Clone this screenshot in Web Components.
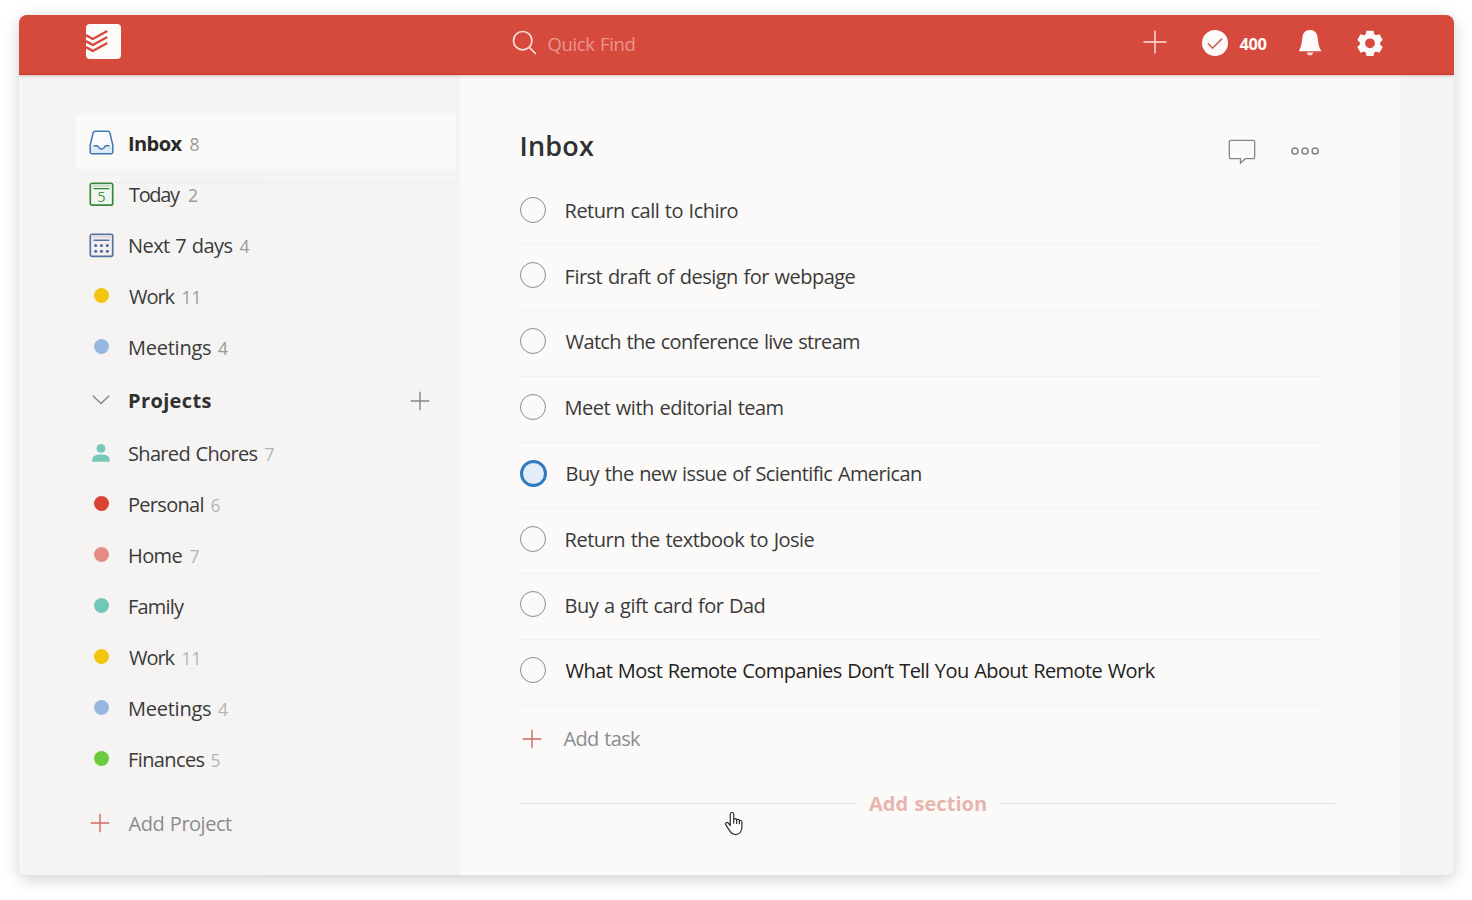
<!DOCTYPE html>
<html lang="en">
<head>
<meta charset="utf-8">
<title>Inbox</title>
<style>
  html, body { margin: 0; height: 100%; background: #fff; overflow: hidden; }
  body { font-family: "Open Sans", "Noto Sans", sans-serif; font-size: 20px; color: #3a3a3a; }
</style>
</head>
<body>
<todo-app></todo-app>
<script>
const define = (name, html, setup) => {
  const tpl = document.createElement('template');
  tpl.innerHTML = html;
  customElements.define(name, class extends HTMLElement {
    connectedCallback() {
      if (this.shadowRoot) return;
      this.attachShadow({ mode: 'open' }).appendChild(tpl.content.cloneNode(true));
      if (setup) setup(this, this.shadowRoot);
    }
  });
};

/* Text whose inked extent is exactly `ink` pixels wide. */
const ctx = document.createElement('canvas').getContext('2d');
define('fit-text', `<style>
  :host { display: block; flex: none; white-space: nowrap; line-height: 28px; font-kerning: normal; word-spacing: 1px; }
</style><slot></slot>`, host => {
  const cs = getComputedStyle(host), text = host.textContent, ink = +host.getAttribute('ink');
  ctx.font = cs.fontWeight + ' ' + cs.fontSize + ' ' + cs.fontFamily;
  const m = ctx.measureText(text);
  const natural = m.actualBoundingBoxLeft + m.actualBoundingBoxRight + text.split(' ').length - 1;
  if (text.length > 1) host.style.letterSpacing = ((ink - natural) / (text.length - 1)).toFixed(3) + 'px';
  host.style.textIndent = m.actualBoundingBoxLeft.toFixed(2) + 'px';
  host.style.width = ink + 'px';
});

const icons = {
  logo: [35, 35, `<rect width="35" height="35" rx="4" fill="#fdfcfb"/><g fill="none" stroke="#d6493d" stroke-width="2.5" stroke-linejoin="round"><path d="M0 11.2 6.8 15 21.3 7"/><path d="M0 17.2 6.8 21 21.3 13"/><path d="M0 23.2 6.8 27 21.3 19"/></g>`],
  search: [26, 26, `<g fill="none" stroke="#fbdcd6" stroke-width="1.7"><circle cx="10.7" cy="10.7" r="9.2"/><path d="M17.3 17.3 24 24"/></g>`],
  plus: [24, 24, `<path d="M12 .5v23M.5 12h23" stroke="#fbe4df" stroke-width="1.4"/>`],
  done: [26, 26, `<circle cx="13" cy="13" r="13" fill="#fdfbf9"/><path d="m5.8 13.3 4.7 4.8 9.7-9.5" fill="none" stroke="#d0625a" stroke-width="1.5"/>`],
  bell: [24, 28, `<path d="M12 1C7.2 1 4.8 4.3 4.4 8.6 4 14 3 18 .8 22.2h22.4C21 18 20 14 19.6 8.6 19.2 4.3 16.8 1 12 1Z" fill="#fdfbf9"/><path d="M8.7 23.4h6.6c-.3 1.8-1.6 2.9-3.3 2.9s-3-1.1-3.3-2.9Z" fill="#f7d9d3"/>`],
  gear: [26, 26, `<path fill="#fdfbf9" fill-rule="evenodd" d="m9.5.8 7 0 .8 3.5 1.7 1 3.5-1.1 3.2 5.8-2.6 2.5v1.9l2.6 2.5-3.2 5.8-3.5-1.1-1.7 1-.8 3.3h-7l-.8-3.3-1.7-1-3.5 1.1-3.2-5.8 2.6-2.5v-1.9L.3 10l3.2-5.8L7 5.3l1.7-1ZM13 8.4a4.9 4.9 0 1 0 0 9.8 4.9 4.9 0 0 0 0-9.8Z"/>`],
  inbox: [25, 25, `<path d="M6.2 1.3h12.6c1.1 0 1.8.5 2.1 1.5l2.9 12.6v6.2c0 1.3-.8 2.1-2.1 2.1H3.300c-1.300 0-2.100-.8-2.100-2.100v-6.200L4.100 2.800c.3-1 1-1.500 2.100-1.500Z" fill="#f9fbfd" stroke="#3f76b5" stroke-width="1.500"/><path d="M2 16h21v5.500c0 1-.6 1.500-1.500 1.500h-18C2.600 23 2 22.500 2 21.500Z" fill="#dfeaf5"/><path d="M4.500 15.800h3.800c.9 0 1 3.400 4.200 3.400s3.300-3.400 4.200-3.400h3.800" fill="none" stroke="#3f76b5" stroke-width="1.500"/>`],
  today: [25, 25, `<rect x="1.300" y="1.300" width="22.400" height="21.900" rx="1.800" fill="#f1f7f0" stroke="#37883b" stroke-width="1.700"/><path d="M2 2h21v3H2z" fill="#cfe2cf"/><path d="M4.500 6.600h16" stroke="#37883b" stroke-width="1.300"/>`],
  week: [25, 25, `<rect x="1.300" y="1.300" width="22.400" height="22.100" rx="1.800" fill="#f6eff1" stroke="#54719f" stroke-width="1.700"/><path d="M2.100 2.100h20.800v3H2.100z" fill="#e2d9e2"/><path d="M4.500 7.300h16" stroke="#54719f" stroke-width="1.500"/><g fill="#4a689b"><circle cx="6.700" cy="12.400" r="1.500"/><circle cx="12.500" cy="12.400" r="1.500"/><circle cx="18.300" cy="12.400" r="1.500"/><circle cx="6.700" cy="18.200" r="1.500"/><circle cx="12.500" cy="18.200" r="1.500"/><circle cx="18.300" cy="18.200" r="1.500"/></g>`],
  person: [18, 18, `<circle cx="9" cy="4.400" r="4.400" fill="#76c9b8"/><path d="M.3 17.700v-1.900c0-3.600 3.400-5.400 8.700-5.400s8.700 1.800 8.700 5.400v1.900Z" fill="#76c9b8"/>`],
  chevron: [18, 10, `<path d="m.8.8 8.200 7.700L17.200.8" fill="none" stroke="#858585" stroke-width="1.400"/>`],
  add: [20, 20, `<path d="M10 .7v18.600M.7 10h18.600" stroke="currentColor" stroke-width="1.400"/>`],
  comment: [28, 26, `<path d="M3.200 1.300h21.600c1.200 0 1.900.7 1.900 1.900v14.600c0 1.200-.7 1.900-1.900 1.900h-7.600l-4.700 4.500v-4.500H3.200c-1.200 0-1.900-.7-1.900-1.900V3.200c0-1.200.7-1.900 1.900-1.900Z" fill="none" stroke="#858585" stroke-width="1.300"/>`],
  more: [30, 10, `<g fill="none" stroke="#858585" stroke-width="1.500"><circle cx="5" cy="5" r="3.100"/><circle cx="15.100" cy="5" r="3.100"/><circle cx="25.200" cy="5" r="3.100"/></g>`],
  hand: [20, 25, `<path d="M6.300 14.500V3.200c0-2.600 3.400-2.600 3.400 0v5.300c.5-1.300 2.800-1.100 2.900.5.600-1 2.600-.7 2.800.8.700-.8 2.500-.4 2.500 1.300v5.200c0 4.400-2.700 7.200-6.300 7.200-3 0-4.600-1.400-6.400-4.300l-3.500-5.500c-1-1.700 1.100-3.100 2.500-1.700Z" fill="#fff" stroke="#333" stroke-width="1.250" stroke-linejoin="round"/><path d="M9.700 8.500v4.300M12.600 9v4M15.400 9.800v3.500" stroke="#333" stroke-width="1.200"/>`]
};
define('ui-icon', `<style>:host { display: block; flex: none; } svg { display: block; overflow: visible; }</style>`, (host, root) => {
  const [w, h, body] = icons[host.getAttribute('name')];
  root.innerHTML += `<svg width="${w}" height="${h}" viewBox="0 0 ${w} ${h}">${body}</svg>`;
});

define('app-header', `<style>
  :host { display: flex; align-items: flex-start; height: 60px; box-sizing: border-box; padding-left: 67px; background: #d6493d;
    border-bottom: 1.500px solid #c5372b; color: #fdfbf9; position: relative; z-index: 1; box-shadow: 0 1px 3px rgba(160,70,60,.3); }
</style>
<ui-icon name="logo" style="margin:9.400px 0 0 -.2px"></ui-icon>
<ui-icon name="search" style="margin:14.500px 0 0 390.700px"></ui-icon>
<fit-text ink="86" style="margin:15px 0 0 11px;font-size:18.500px;color:#ea968c">Quick Find</fit-text>
<ui-icon name="plus" style="margin:15px 0 0 508px"></ui-icon>
<ui-icon name="done" style="margin:15px 0 0 35px"></ui-icon>
<fit-text ink="27" style="margin:14.500px 0 0 12px;font-size:16.500px;font-weight:700">400</fit-text>
<ui-icon name="bell" style="margin:14px 0 0 31px"></ui-icon>
<ui-icon name="gear" style="margin:14.500px 0 0 35.200px"></ui-icon>`);

define('nav-item', `<style>
  :host { display: grid; grid-template-columns: 53px auto 1fr; align-items: center; height: 51px; box-sizing: border-box; }
  :host([selected]) { height: 54px; padding-top: 4px; background: #fbfaf8; margin-right: 4px; margin-bottom: .5px; }
  .lead { display: grid; place-items: center; width: 25px; margin-left: 13px; }
  .dot { width: 15px; height: 15px; border-radius: 50%; margin: -3px 0 0 -1px; }
  .lead ui-icon { grid-area: 1/1; margin-top: -2px; }
  .lead ui-icon[name=person] { margin: -1px 0 0 -1px; }
  .lead ui-icon[name=inbox] { margin-top: -3px; }
  .day { grid-area: 1/1; font-size: 14px; line-height: 14px; color: #3b9a4a; padding-top: 4px; z-index: 1; }
  .count { margin: 0 0 0 7px; font-size: 17.500px; color: var(--count, #999); }
</style>
<span class="lead"></span><slot></slot>`, (host, root) => {
  const lead = root.querySelector('.lead'), icon = host.getAttribute('icon'), n = host.getAttribute('count');
  if (icon) lead.innerHTML = `<ui-icon name="${icon}"></ui-icon>` + (icon === 'today' ? '<span class="day">5</span>' : '');
  else lead.innerHTML = `<span class="dot" style="background:${host.getAttribute('dot')}"></span>`;
  if (n) {
    const c = document.createElement('fit-text');
    c.className = 'count'; c.textContent = n; c.setAttribute('ink', n.length > 1 ? 16 : 9);
    root.appendChild(c);
  }
});

define('side-bar', `<style>
  :host { display: block; width: 441px; box-sizing: border-box; padding: 40px 0 0 57px;
    background: linear-gradient(#ecebea, #ecebea) 94px 107px / 347px 1px no-repeat,
      linear-gradient(#f6f5f6, #f6f5f6) 243px 107px / 198px 800px no-repeat, #f5f4f3; }
  .group { display: grid; grid-template-columns: 16px 36px auto 1fr 50px; align-items: center; height: 55px; margin-top: -.5px; }
  .projects { --count: #b5b4b4; }
  .add { display: flex; align-items: center; height: 28px; margin-top: 25px; padding-left: 14px; color: #8c8c8c; }
  .add ui-icon { color: #d0695f; margin-top: -1.500px; }
  .add fit-text { margin-left: 18.500px; }
  .group .plus { color: #858585; margin-top: .5px; }
  .group ui-icon[name=chevron] { margin-top: -2px; }
</style>
<nav-item selected icon="inbox" count="8"><fit-text ink="53.500" style="font-weight:700;color:#292929">Inbox</fit-text></nav-item>
<nav-item icon="today" count="2"><fit-text ink="52">Today</fit-text></nav-item>
<nav-item icon="week" count="4"><fit-text ink="103.500">Next 7 days</fit-text></nav-item>
<nav-item dot="#f2c511" count="11"><fit-text ink="46.500">Work</fit-text></nav-item>
<nav-item dot="#96b8df" count="4"><fit-text ink="82">Meetings</fit-text></nav-item>
<div class="group"><span></span><ui-icon name="chevron"></ui-icon><fit-text ink="82.500" style="font-weight:700;color:#303030;margin-left:1px">Projects</fit-text><span></span><ui-icon class="plus" name="add"></ui-icon></div>
<div class="projects">
<nav-item icon="person" count="7"><fit-text ink="128.500">Shared Chores</fit-text></nav-item>
<nav-item dot="#d84335" count="6"><fit-text ink="74.500">Personal</fit-text></nav-item>
<nav-item dot="#e38d86" count="7"><fit-text ink="53.500">Home</fit-text></nav-item>
<nav-item dot="#70c8b8"><fit-text ink="56">Family</fit-text></nav-item>
<nav-item dot="#f2c511" count="11"><fit-text ink="46.500">Work</fit-text></nav-item>
<nav-item dot="#96b8df" count="4"><fit-text ink="82">Meetings</fit-text></nav-item>
<nav-item dot="#6bcb3c" count="5"><fit-text ink="75.500">Finances</fit-text></nav-item>
</div>
<div class="add"><ui-icon name="add"></ui-icon><fit-text ink="103.500">Add Project</fit-text></div>`);

define('task-row', `<style>
  :host { display: flex; align-items: center; height: 65.800px; box-sizing: border-box; padding-bottom: 1.800px; border-bottom: 1px solid #f2f1ef; width: 800px; }
  .check { width: 26px; height: 26px; box-sizing: border-box; border: 1.200px solid #8b8b8b; border-radius: 50%; margin: -2.700px 20px 0 -.4px; flex: none; }
  :host([active]) .check { border: 3px solid #2e7bc0; background: #e2edf8; width: 27px; height: 27px; margin: -.7px 20px 0 -.4px; }
</style><span class="check"></span><slot></slot>`);

define('inbox-view', `<style>
  :host { display: block; width: 941px; box-sizing: border-box; padding-left: 60px; background: #fbfaf8; border-right: 1px solid #f8f7f5; }
  header { display: flex; align-items: flex-start; height: 104.400px; }
  .add { display: flex; align-items: center; height: 28px; margin-top: 19.500px; padding-left: 2px; color: #8c8c8c; }
  .add ui-icon { color: #d0695f; margin-top: -1px; }
  .section { display: flex; align-items: center; margin-top: 37px; width: 815px; height: 28px; }
  .section i { height: 1px; background: #dfdedc; flex: 1; margin-top: -1px; }
  .section fit-text { margin: 0 13px; font-weight: 700; color: #e6b5ad; }
</style>
<header>
  <fit-text ink="72.500" style="margin:56.500px 0 0 1.500px;font-size:27px;font-weight:600;color:#303030">Inbox</fit-text>
  <ui-icon name="comment" style="margin:64px 0 0 634px"></ui-icon>
  <ui-icon name="more" style="margin:71px 0 0 34px"></ui-icon>
</header>
<task-row><fit-text ink="172">Return call to Ichiro</fit-text></task-row>
<task-row><fit-text ink="290">First draft of design for webpage</fit-text></task-row>
<task-row><fit-text ink="293.500">Watch the conference live stream</fit-text></task-row>
<task-row><fit-text ink="217">Meet with editorial team</fit-text></task-row>
<task-row active><fit-text ink="354.500">Buy the new issue of Scientific American</fit-text></task-row>
<task-row><fit-text ink="249">Return the textbook to Josie</fit-text></task-row>
<task-row><fit-text ink="199">Buy a gift card for Dad</fit-text></task-row>
<task-row><fit-text ink="590" style="color:#222">What Most Remote Companies Don’t Tell You About Remote Work</fit-text></task-row>
<div class="add"><ui-icon name="add"></ui-icon><fit-text ink="77.500" style="margin-left:21.500px">Add task</fit-text></div>
<div class="section"><i></i><fit-text ink="117">Add section</fit-text><i></i></div>`);

define('todo-app', `<style>
  :host { display: block; height: 900px; box-sizing: border-box; padding: 15px 18px 25px 19px; }
  .window { display: flex; flex-direction: column; height: 860px; border-radius: 8px; overflow: hidden; background: #f5f4f3; box-shadow: 0 4px 16px rgba(0,0,0,.19); }
  .body { display: flex; flex: 1; min-height: 0; }
  .cursor { position: absolute; left: 724px; top: 811px; }
</style>
<div class="window"><app-header></app-header><div class="body"><side-bar></side-bar><inbox-view></inbox-view></div></div>
<ui-icon class="cursor" name="hand"></ui-icon>`);
</script>
</body>
</html>
